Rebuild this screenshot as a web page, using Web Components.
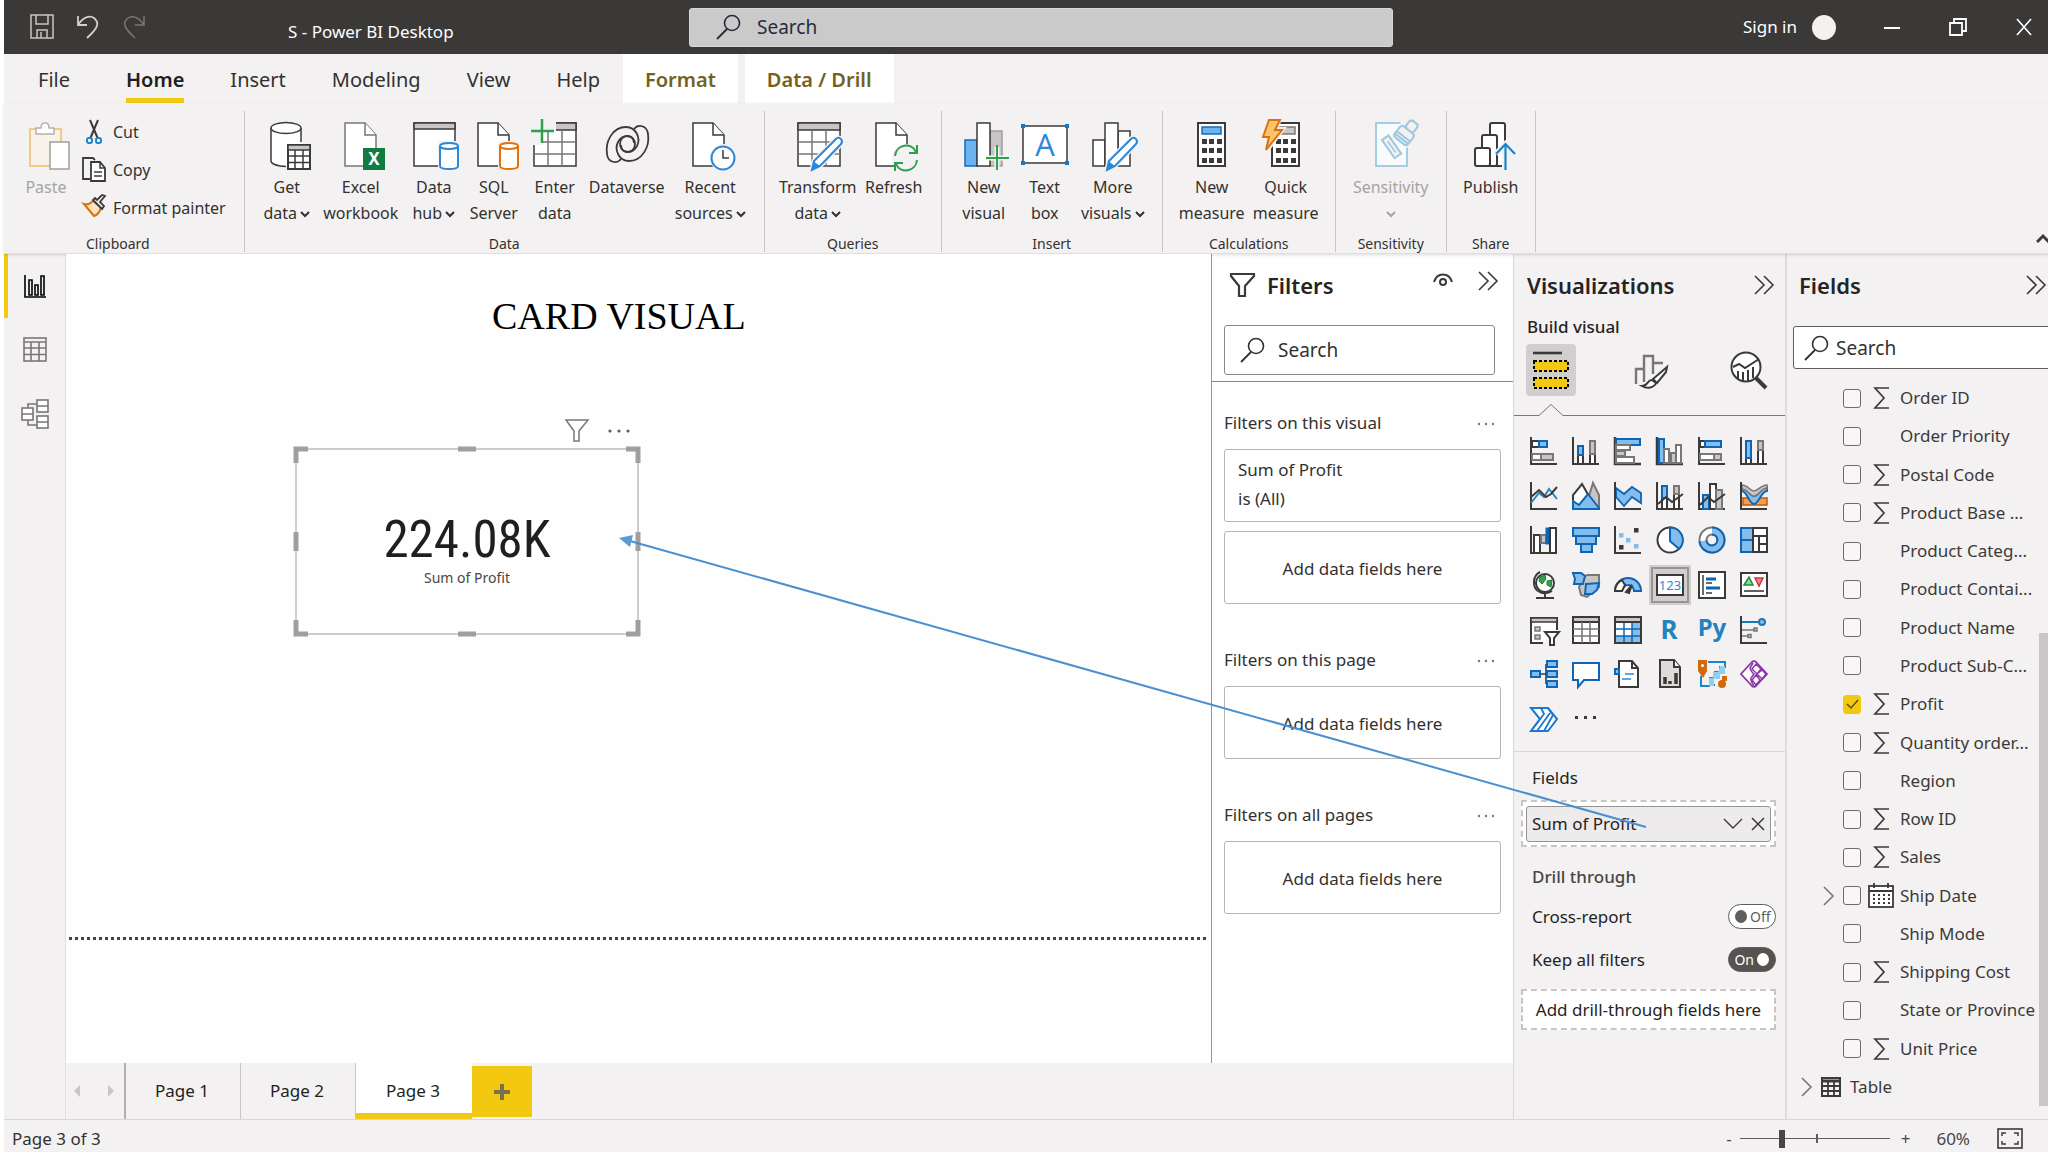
<!DOCTYPE html>
<html lang="en">
<head>
<meta charset="utf-8">
<title>S - Power BI Desktop</title>
<style>
html,body{margin:0;height:100%}
body{font:17px/26px "Noto Sans","Open Sans",sans-serif;color:#323130;background:#fff;overflow:hidden}
</style>
</head>
<body>
<pb-app></pb-app>
<script>
const K='#3b3a39',G='#797775',B='#83bdec',D='#0f64b4',L='#c8c6c4',W='#fff';
const p=(d,f='none',s=K,w=2,x='')=>`<path d="${d}" fill="${f}" stroke="${s}" stroke-width="${w}" ${x}/>`;
const r=(x,y,w,h,f=W,s=K,sw=2,rx=0)=>`<rect x="${x}" y="${y}" width="${w}" height="${h}" fill="${f}" stroke="${s}" stroke-width="${sw}" rx="${rx}"/>`;
const c=(x,y,q,f='none',s=K,w=2)=>`<circle cx="${x}" cy="${y}" r="${q}" fill="${f}" stroke="${s}" stroke-width="${w}"/>`;
const doc=(x,s=K)=>p(`M${x} 4h20l11 12v31h-31z`,W,s,1.5)+p(`M${x+20} 4v12h11`,W,s,1.5);
const cyl=(x,s)=>p(`M${x-2} 22h23v30h-23z`,'#f3f1f1','none')+p(`M${x} 27v20c0 4 18 4 18 0V27`,W,s,2)+`<ellipse cx="${x+9}" cy="27" rx="9" ry="3" fill="#fff" stroke="${s}" stroke-width="2"/>`;
const grid=(x)=>r(x,4,42,43,W,K,1.5)+r(x,4,42,7,L,K,1.5)+p(`M${x} 23h42M${x} 35h42M${x+14} 11v36M${x+28} 11v36`,'none',G,1.5);
const pencil=p('M43 20c3-3 8 1 5 5L27 47l-8 4 2-9z','#fff','#f3f1f1',5)+p('M43 20c3-3 8 1 5 5L27 47l-8 4 2-9z',W,'#2b88d8',2)+p('M21 43l5 4-7 4z','#2b88d8','#2b88d8',1);
const dots9=[15,22,30].map(x=>[20,29,39].map(y=>`<rect x="${x}" y="${y}" width="5" height="5" fill="${K}"/>`).join('')).join('');
const axis=p('M1 0v27h26','none',K,2);
const ICONS={
/* ribbon, 50 x 52 */
paste:[50,52,r(9,10,31,37,'#f8f2e8','#f3c98b',2)+r(29,23,19,27,'#fff','#a19f9d',1.5)+p('M15 15V9h5c0-7 8-7 8 0h5v6z',W,'#b3b0ad',1.5)],
getdata:[50,52,p('M9 9v33c0 3 7 5 16 5.500V25h14V9z',W,'none')+p('M9 9v33c0 3 7 5 15 5.500M39 9v14','none',K,1.500)+`<ellipse cx="24" cy="9" rx="15" ry="5.500" fill="#fff" stroke="${K}" stroke-width="1.500"/>`+r(26,26,22,24,W,K,2)+r(26,26,22,5,L,K,1.500)+p('M33 31v19M41 31v19M26 37h22M26 43.500h22','none',K,1.500)],
excel:[50,52,doc(9,G)+r(27,29,22,22,'#107c41','none',0)+`<text x="38" y="46" font-size="17" font-weight="700" fill="#fff" text-anchor="middle">X</text>`],
datahub:[50,52,r(5,4,41,43,W,K,1.500)+r(5,4,41,6,L,K,1.500)+cyl(31,'#2b88d8')],
sql:[50,52,doc(9)+cyl(31,'#e3730c')],
enter:[50,52,grid(4)+p('M0 0h26v12H12v14H0z','#f3f1f1','none')+p('M12 0v24M1 12h23','none','#2f9e4f',2.500)],
dataverse:[50,52,['','rotate(180 25.500 25)'].map(t=>`<g transform="${t}">${p('M32 24c0-10-14-9-14 1 0 9 12 11 17 2 4-8-1-19-11-19C11 8 3 22 5 35c1 9 10 10 14 5','none',K,1.800)}</g>`).join('')],
recent:[50,52,doc(8)+c(39,39,14,'#f3f1f1','none')+c(38,39,11.500,W,'#2b88d8',2)+p('M38 31v8h6','none',K,1.500)],
transform:[50,52,grid(5)+pencil],
refresh:[50,52,doc(7)+c(37,39,14,'#f3f1f1','none')+p('M26 37c1-12 17-14 21-4M48 26v8h-8M48 41c-1 12-17 14-21 4M26 52v-8h8','none','#2f9e4f',2)],
newvisual:[50,52,r(31,12,12,35,L,'#a19f9d',1.500)+r(6,21,12,26,'#6db3f2','#0f6cbd',1.500)+r(18,4,13,43,W,K,1.500)+p('M38 28v23M27 39h23','none','#f3f1f1',5)+p('M38 26v25M27 39h23','none','#2f9e4f',2)],
textbox:[50,52,r(3,7,44,37,W,K,1.500)+[[1,5],[45,5],[1,42],[45,42]].map(a=>r(a[0],a[1],4,4,'#0f78d4','none',0)).join('')+`<text x="25" y="37" font-size="31" fill="#2b88d8" text-anchor="middle" font-family="Open Sans">A</text>`],
morevisuals:[50,52,r(5,21,12,26,W,K,1.500)+r(30,12,12,35,W,K,1.500)+r(17,4,13,43,W,K,1.500)+pencil],
newmeasure:[50,52,r(11,4,27,43,W,K,2)+r(15,8,19,7,'#6db3f2','#0f6cbd',1.500)+dots9],
quickmeasure:[50,52,r(11,4,27,43,W,K,2)+r(18,8,16,7,L,G,1.500)+dots9+p('M7 0h12l-4 10h7L5 33l3-14H1z','#f3f1f1','#f3f1f1',4)+p('M8 1h11l-5 10h7L5 31l3-13H2z','#fcc46a','#d9730d',2)],
sensitivity:[50,52,r(10,4,31,43,'#f8fafc','#9cc8e2',1.800)+p('M34 2l16 0 1 20-12 8z','#f3f1f1','none')+`<g transform="rotate(38 39 16)">${r(30,10,17,14,'#f3f1f1','#9cc8e2',2,3)+r(34,0,10,10,'#f3f1f1','#9cc8e2',2,3)+p('M30 18h17M30 21h17','none','#9cc8e2',2)}</g><g transform="rotate(55 25 27)">${r(15,23,22,8,'#f3f1f1','#9cc8e2',2)+p('M19 27h14','none','#9cc8e2',1.500)}</g>`],
publish:[50,52,r(24,4,15,43,W,K,2,2)+r(16,16,15,31,W,K,2,2)+r(9,29,15,18,W,K,2,2)+p('M39 25v27M30 35l9.500-10 9.500 10','none','#f3f1f1',6)+p('M39.500 25v26M30 35l9.500-10 9.500 10','none','#1a86c8',2.200)],
/* small */
cut:[24,26,p('M8 1l8 19M16 1L8 20','none',K,2)+r(5,19,5,5,W,'#1a86c8',2,2)+r(14,19,5,5,W,'#1a86c8',2,2)],
copy:[24,26,p('M8 22H1V1h10l2 2','none',K,1.800)+p('M9 5h9l5 6v13H9z',W,K,1.800)+p('M18 5v6h5M12 15h8M12 19h8','none',K,1.500)],
painter:[24,26,p('M2 9l10 12c3-1 6-4 7-9l-8-6c-3 3-6 4-9 3z','#fde3c4','#d9730d',2)+p('M11 5l9 9 2-3-4-4 5-6-3-1-5 5-2-2z','#f3f1f1',K,1.800)],
save:[24,26,r(1,1,22,23,'none','#c8c6c4',1.500)+p('M6 1v9h12V1M7 24v-8h10v8M11 18v6','none','#c8c6c4',1.500)],
undo:[24,26,p('M2 2v9h9M2 11C7 3 14 1 18 4c6 5 4 10-7 20','none','#d2d0ce',1.800)],
redo:[24,26,p('M22 2v9h-9M22 11C17 3 10 1 6 4c-6 5-4 10 7 20','none','#797775',1.500)],
mag:[26,26,c(17,9,7.500,'none','currentColor',1.600)+p('M12 15L2 25','none','currentColor',1.800)],
min:[18,18,p('M1 10h16','none','#fff',2)],
restore:[18,18,p('M5 4V1h12v12h-4M1 5h12v12H1z','none','#fff',1.800)],
close:[18,18,p('M2 1l14 16M16 1L2 17','none','#fff',1.600)],
up:[14,12,p('M1 9l6-6 6 6','none',K,3)],
caret:[10,8,p('M1 2l4 4 4-4','none','currentColor',2)],
chart:[26,30,p('M3 4v22h21','none','#000',1.600)+p('M7 9h3v15H7zM13 14h3v10h-3zM19 5h3v19h-3z','none','#000',1.600)],
tablegrid:[26,30,r(2,3,22,23,'none',G,1.600)+p('M2 7h22M2 13h22M2 19.500h22M9 7v19M17 7v19','none',G,1.600)],
model:[28,30,r(16,1,11,12,W,G,1.600)+r(16,17,11,12,W,G,1.600)+r(1,9,11,12,W,G,1.600)+p('M16 7h11M16 23h11M1 15h11M7 9V5h9M7 21v5h9','none',G,1.600)],
funnel:[26,26,p('M2 2h23v2l-9 10v10h-6V14L2 4z','none',K,2.200)],
funnelthin:[26,26,p('M2 2h22L15 13v10h-5V13z','none',G,1.500)],
dots:[24,6,[3,12,21].map(x=>c(x,3,1.600,'currentColor','none')).join('')],
more:[18,6,[2,9,16].map(x=>c(x,4,1.200,'#797775','none')).join('')],
eye:[22,16,p('M2 9C5-1 17-1 20 9','none',K,2)+c(11,9,3,'none',K,2)],
dbl:[22,22,p('M2 2l9 9-9 9M11 2l9 9-9 9','none',K,1.600)],
right:[12,22,p('M1 2l9 9-9 9','none',G,1.600)],
down:[20,12,p('M1 1l9 9 9-9','none',K,1.400)],
x:[14,14,p('M1 1l12 12M13 1L1 13','none',K,1.500)],
sigma:[17,24,p('M16 2H2l9 10-9 10h14','none',K,1.700)],
calendar:[26,25,r(1,3,24,21,W,K,1.800)+p('M1 8h24M6 0v5M20 0v5','none',K,1.800)+p('M5 12h17M5 16h17M5 20h17','none',K,1.800,'stroke-dasharray="2 3"')],
tbl:[20,20,r(1,1,18,18,'none',K,2)+p('M1 4h18','none',K,3)+p('M1 9h18M1 14h18M7 3v16M13 3v16','none',K,1.800)],
plus:[18,18,p('M9 1v16M1 9h16','none','#7a6f4e',4)],
tri:[8,14,p('M7 1v12L1 7z',L,'none')],
fit:[26,22,r(1,1,24,19,'none',K,1.600)+p('M5 8V5h4M17 5h4v3M21 13v3h-4M9 16H5v-3','none',K,1.500)],
/* pane mode tabs, 40 x 40 */
build:[40,40,p('M2 3h29','none',K,2.600)+r(3,11,34,10,'#f2c811','#000',2).replace('/>',' stroke-dasharray="3 2"/>')+r(3,28,34,10,'#f2c811','#000',2).replace('/>',' stroke-dasharray="3 2"/>')],
format:[40,40,p('M6 34V19h8V6h9v18M14 19v13M23 13h10','none',G,2.400)+p('M37 17L23 29l4 4 9-11zM22 30c-5 0-4 6-10 6 5 3 12 2 14-3z',W,K,2)],
analytics:[40,40,c(18,17,14.500,W,K,2)+p('M5 17l6-3 6 4 14-9M10 21v8M15 22v10M20 20v11M25 17v11','none',K,2)+p('M28 28l10 10','none',K,4)],
/* visual types, 28 x 28 */
v0:[28,28,axis+r(2,4,7,6,W)+r(9,4,8,6,B,D)+r(2,17,9,6,W,G)+r(11,17,12,6,L,G)],
v1:[28,28,axis+r(6,18,5,9,W)+r(6,9,5,9,B,D)+r(18,17,5,10,W)+r(18,4,5,13,L,G)],
v2:[28,28,p('M1 0v27h26','none',K,2.500)+r(2,2,24,6,B,D)+r(2,8,14,5,W,G)+r(2,14,9,5,L,G)+r(2,20,18,6,W,G)],
v3:[28,28,p('M1 0v27h26','none',K,2.500)+r(3,2,5,24,B,D)+r(8,12,5,14,W,G)+r(15,16,5,10,L,G)+r(20,8,5,18,W,G)],
v4:[28,28,axis+r(2,4,5,6,W)+r(7,4,16,6,B,D)+r(2,17,14,6,W,G)+r(16,17,7,6,L,G)],
v5:[28,28,axis+r(6,21,5,6,W)+r(6,4,5,17,B,D)+r(18,13,5,14,W)+r(18,4,5,9,L,G)],
v6:[28,28,axis+p('M1 21L9 11l5 4 5-8 8 10','none','#2b88b8',2)+p('M1 15l8-7 7 7 5-3 6-7','none',K,2)],
v7:[28,28,p('M13 27L21 1l6 12v14z',L,G)+p('M1 27V13L10 2l8 14-7 11z',W,K)+p('M1 27v-8l6 4 9-11 11 14v1z',B,D)],
v8:[28,28,p('M2 6l8 6 8-7 9 6v10l-9-6-8 9-8-9z',B,D,1.800)+axis],
v9:[28,28,axis+r(6,15,5,12,W)+r(6,4,5,12,B,D)+r(18,12,5,15,W)+r(18,4,5,8,L,G)+p('M2 22l8-7 6 5 11-8','none',K,2)],
v10:[28,28,axis+r(5,13,6,14,B,D)+r(12,2,6,25,W)+r(18,8,6,19,L,G)+p('M2 23l8-8 6 5 11-8','none',K,2)],
v11:[28,28,r(3,16,24,7,'#f0a04a','#c65f0a',1.600)+p('M2 9c5 0 7 13 12 13s7-13 13-13v-4c-6 0-8 9-13 9S8 6 2 6z',B,D,1.800)+p('M2 3c6 0 8 6 12 6s7-6 13-6v3c-6 0-8 8-13 8S8 7 2 7z',L,G,1.500)+axis],
v12:[28,28,axis+r(4,9,6,18,W)+r(11,9,5,8,L,G)+r(16,2,3,16,D,D,1)+r(20,2,6,25,W)],
v13:[28,28,r(1,2,26,8,B,D)+r(4,10,20,8,B,D)+r(9,18,11,8,B,D)],
v14:[28,28,axis+[[20,2,K],[5,7,B],[12,12,B],[5,19,K],[20,18,B]].map(a=>r(a[0],a[1],4.500,4.500,a[2],'none',0)).join('')],
v15:[28,28,c(14,14,12.500,W,K)+p('M14 1.500A12.500 12.500 0 0 1 23 23L14 15z',B,D)],
v16:[28,28,c(14,14,9,'none',G,9)+c(14,14,9,'none',W,5)+p('M14 5a9 9 0 1 1-9 10','none',D,9)+p('M14 5a9 9 0 1 1-9 10','none',B,5)],
v17:[28,28,r(1,2,12,12,B,D)+r(1,14,12,12,B,D)+r(13,2,14,8,W,K)+r(13,10,6,16,W,K)+r(19,10,8,8,W,K)+r(19,18,8,8,W,K)],
v18:[28,28,c(15,12,9,W,K)+p('M10 6l5-2 1 4-4 5-3-3zM17 10l5-1-1 7-4-2z','#36a04e','#1e7b3c',1)+p('M10 1C2 5 2 18 10 21c4 2 9 1 12-1M15 23v4M6 27h18','none',K,2)],
v19:[28,28,p('M12 6l3-2h12v12l-6 5-6 5-6-2-2-8z',L,G)+p('M1 2h8l4 3-2 8H2l1-5zM14 13l13-1-2 7-5 4h-7z',B,D)],
v20:[28,28,p('M1 20a13 13 0 0 1 26 0h-7a6 6 0 0 0-12 0z',B,D)+p('M1 20a13 13 0 0 1 7-11l3 5-3 6z',W,K)+p('M12 21l6-7-3 8z',K,K,2)],
v21:[28,28,r(1,4,26,20,W,K)+`<text x="14" y="19" font-size="13" fill="#2b88d8" text-anchor="middle">123</text>`],
v22:[28,28,r(1,1,26,26,W,K)+p('M5 4v20','none',K,1.500)+p('M8 8h10M8 17h14','none',D,3)+p('M8 12h6M8 22h6','none',K,1.500)],
v23:[28,28,r(1,2,26,23,W,K)+p('M4 14l5-8 4 8z','#8fd0a0','#1e8b3c',1.500)+p('M15 7h8l-4 8z','#e88','#d13438',1.500)+p('M4 20h20','none',K,1.600)],
v24:[28,28,p('M13 27H1V2h26v12','#fff',K)+r(1,2,26,4,L,K,1.500)+r(5,11,5,4,L,G,1.500)+r(5,19,5,4,L,G,1.500)+p('M15 16h14l-5 6v7h-4v-7z',W,K,2)],
v25:[28,28,r(1,1,26,26,W,K)+r(1,1,26,5,L,K)+p('M10 6v21M18 6v21M1 13h26M1 20h26','none',G,1.600)],
v26:[28,28,r(1,1,26,26,W,K)+r(18,6,9,21,B,'none',0)+r(1,20,26,7,B,'none',0)+p('M10 6v21M18 6v21M1 13h26M1 20h26','none',D,1.500)+r(1,1,26,5,L,K)+p('M1 6v21h26V6','none',K,2)],
v27:[28,28,`<text x="13" y="23" font-size="26" font-weight="700" fill="#2383be" text-anchor="middle">R</text>`],
v28:[28,28,`<text x="14" y="20" font-size="24" font-weight="700" fill="#2383be" text-anchor="middle">Py</text>`],
v29:[28,28,axis+p('M2 6h18','none','#1a78b8',2)+c(22,6,3,B,'#1a78b8')+p('M2 14h12M2 20h6','none',G,1.600)+r(14,12,3,3,L,G,1.500)+r(8,18.500,3,3,L,G,1.500)],
v30:[28,28,p('M10 14h6M16 4v20M16 4h2M16 24h2','none',K,1.600)+r(1,11,9,6,B,D)+r(17,1,10,6,B,D)+r(17,11,10,6,B,D)+r(17,21,10,6,B,D)],
v31:[28,28,p('M1 3h26v17H12l-6 7v-7H1z',W,D)],
v32:[28,28,p('M5 1h13l6 7v19H5z',W,K)+p('M18 1v7h6M11 14h9M8 19h9','none','#2b88d8',1.600)+p('M18 1v7h6','none',K)+r(1,9,4,5,B,D)],
v33:[28,28,p('M4 0h14l6 7v20H4z','#dddbd9',K)+p('M18 0v7h6','#fff',K)+p('M9 17v7M14 21v3M20 13v11','none',K,3.500)],
v34:[28,28,p('M10 2h17v5h-5v5h-5v6h-5v7h5M12 26H3V16','none','#1a86c8',2)+p('M22 6h5v8h-5v5h-6v7h-5v-8h4v-6h5z','#8fd0f0','none')+p('M0 0h9v11l-4 7-5-7z','#d06a0a','none')+c(4.500,5.500,1.500,W,'none')+c(24,24,4,'#d06a0a','none')+r(24,16,5,5,'#d06a0a','none',0)],
v35:[28,28,p('M12 2L1 14l11 12c1 1 3 1 4 0l11-12L16 2c-1-1-3-1-4 0z',W,'#8a35a8',1.800)+p('M13 3l-3 5c0 3 5 7 4 6l-3 4c-1 3 2 6 3 8M16 4l5 5-4 5-5-5zM22 10l4 4-4 5-5-5zM16 15l4 5-4 5-4-5z','none','#8a35a8',1.500)],
v36:[28,28,p('M1 3h17l9 11-9 12H1l9-12z',W,'#1a78d0',2)+p('M1 3h10l3 6L1 26M14 26l9-16-5-7M7 26L20 8','none','#1a78d0',1.800)],
v37:[28,28,[3,12,21].map(x=>r(x,11,3,3,K,'none',0)).join('')]
};
const BTN='button{font:inherit;color:inherit;background:none;border:0;margin:0;padding:0;display:flex;align-items:center;justify-content:center}';
function el(name,css,html){
  customElements.define(name,class extends HTMLElement{
    connectedCallback(){
      if(this.shadowRoot)return;
      const s=this.attachShadow({mode:'open'});
      s.innerHTML=`<style>*{box-sizing:border-box}:host{display:block;box-sizing:border-box}${BTN}${css}</style>${typeof html==='function'?html(this):html}`;
    }
  });
}
const ic=n=>`<pb-icon name="${n}"></pb-icon>`;
el('pb-icon',':host{display:block;flex:none;line-height:0}svg{display:block;overflow:visible}',h=>{
  const[w,t,b]=ICONS[h.getAttribute('name')];
  return `<svg width="${w}" height="${t}" viewBox="0 0 ${w} ${t}" aria-hidden="true">${b}</svg>`;
});
el('pb-search',`:host{display:flex;align-items:center;border:1px solid #8a8886;border-radius:3px;background:#fff;color:#323130}
input{flex:1;min-width:0;width:0;border:0;outline:0;background:none;font:inherit;font-size:19px;color:inherit;padding:0}
input::placeholder{color:inherit;opacity:1}`,`${ic('mag')}<input type="search" placeholder="Search" aria-label="Search">`);

el('pb-titlebar',`:host{display:flex;align-items:center;height:54px;background:#3b3838;color:#fff;padding:0 15px 0 26px}
.q{display:flex;gap:22px;width:258px}.t{width:401px;padding-top:10px}
pb-search{width:704px;height:39px;background:#cbcaca;border-color:#d8d6d6;padding-left:25px;gap:16px;color:#252a3a}
.r{margin-left:auto;display:flex;align-items:center}.s{gap:15px;margin-right:47px}
.s i{width:24px;height:25px;border-radius:50%;background:#f3f2f1}.w{display:flex;gap:48px}`,
`<div class="q"><button aria-label="Save">${ic('save')}</button><button aria-label="Undo">${ic('undo')}</button><button aria-label="Redo">${ic('redo')}</button></div>
<div class="t">S - Power BI Desktop</div><pb-search></pb-search>
<div class="r"><button class="s">Sign in<i></i></button><div class="w"><button aria-label="Minimize">${ic('min')}</button><button aria-label="Restore">${ic('restore')}</button><button aria-label="Close">${ic('close')}</button></div></div>`);

el('pb-menu',`:host{display:flex;height:49px;font-size:20px;padding-left:11px;background:#f3f1f1}
button{padding:2px 23px 0;position:relative}.f{margin-right:10px}
.a{font-weight:600;color:#201f1e}.a::after{content:"";position:absolute;left:23px;right:23px;bottom:0;height:5px;background:#f2c811}
.c{background:#fff;color:#75611c;font-weight:600;padding:2px 22px 0}.c+.c{margin-left:7px}`,
`<button class="f">File</button><button class="a">Home</button><button>Insert</button><button>Modeling</button><button>View</button><button>Help</button><button class="c">Format</button><button class="c">Data / Drill</button>`);

el('pb-tool',`:host{flex:none}button{flex-direction:column;justify-content:flex-start;width:100%}
span{display:flex;align-items:center;justify-content:center;gap:3px;min-height:26px;white-space:nowrap}
pb-icon{margin-bottom:3px}span pb-icon{margin:2px 0 0}.d{color:#a6a4a2}`,h=>{
  h.style.width=h.getAttribute('width')+'px';
  const a=h.getAttribute('label').split('|'),m=h.hasAttribute('menu'),d=h.hasAttribute('disabled');
  return `<button class="${d?'d':''}" ${d?'disabled':''}>${ic(h.getAttribute('icon'))}${a.map((t,i)=>`<span>${t}${m&&i===a.length-1?ic('caret'):''}</span>`).join('')}</button>`;
});
el('pb-group',`:host{display:flex;flex-direction:column;justify-content:space-between;height:141px;padding:8px 12px 0;border-right:1px solid #c8c6c4}
:host([wide]){padding:8px 18px 0 6px}
.b{display:flex;align-items:flex-start}.l{font-size:14px;line-height:16px;text-align:center}`,h=>`<div class="b"><slot></slot></div><div class="l">${h.getAttribute('label')}</div>`);
const tool=(i,l,w,m='')=>`<pb-tool icon="${i}" label="${l}" width="${w}" ${m}></pb-tool>`;
el('pb-ribbon',`:host{display:flex;height:151px;padding-top:8px;background:#f3f1f1;border-bottom:1px solid #e1dfdd;box-shadow:0 1px 3px #0002;position:relative;font-size:16px}
.s{display:flex;flex-direction:column;margin:-6px 0 0}.s button{height:38px;gap:7px;justify-content:flex-start;white-space:nowrap}
.e{margin:0 0 8px auto;align-self:flex-end;overflow:hidden;width:12px;justify-content:flex-start}`,
`<pb-group label="Clipboard" wide>${tool('paste','Paste',72,'disabled')}<div class="s"><button>${ic('cut')}Cut</button><button>${ic('copy')}Copy</button><button>${ic('painter')}Format painter</button></div></pb-group>
<pb-group label="Data">${tool('getdata','Get|data',60,'menu')+tool('excel','Excel|workbook',88)+tool('datahub','Data|hub',58,'menu')+tool('sql','SQL|Server',62)+tool('enter','Enter|data',60)+tool('dataverse','Dataverse',84)+tool('recent','Recent|sources',83,'menu')}</pb-group>
<pb-group label="Queries">${tool('transform','Transform|data',82,'menu')+tool('refresh','Refresh',70)}</pb-group>
<pb-group label="Insert">${tool('newvisual','New|visual',60)+tool('textbox','Text|box',62)+tool('morevisuals','More|visuals',74,'menu')}</pb-group>
<pb-group label="Calculations">${tool('newmeasure','New|measure',74)+tool('quickmeasure','Quick|measure',74)}</pb-group>
<pb-group label="Sensitivity">${tool('sensitivity','Sensitivity|',86,'menu disabled')}</pb-group>
<pb-group label="Share">${tool('publish','Publish',64)}</pb-group>
<button class="e" aria-label="Collapse ribbon">${ic('up')}</button>`);

el('pb-rail',`:host{width:62px;background:#f3f1f1;border-right:1px solid #e1dfdd}
button{height:64px;width:100%;border-left:4px solid transparent;padding-right:4px}.a{border-color:#f2c811}`,
`<button class="a" aria-label="Report">${ic('chart')}</button><button aria-label="Data">${ic('tablegrid')}</button><button aria-label="Model">${ic('model')}</button>`);

el('pb-card',`:host{width:344px;height:187px;border:2px solid #cfcdcb;display:flex;flex-direction:column;align-items:center;padding-top:60px;color:#201f1e}
b{font:400 51px/60px "Roboto Condensed",Roboto,sans-serif}small{font-size:14px;line-height:20px;color:#494745;margin-top:-2px}
svg{position:absolute;left:-4px;top:-4px}
.m{position:absolute;right:6px;top:-32px;display:flex;align-items:center;gap:17px;color:#605e5c}`,
`<b>224.08K</b><small>Sum of Profit</small>
<svg width="348" height="191" viewBox="0 0 348 191"><path d="M3 17V3h12M333 3h12v14M345 174v14h-12M15 188H3v-14M165 3h18M165 188h18M3 86v19M345 86v19" fill="none" stroke="#a19f9d" stroke-width="5"/></svg>
<div class="m"><button aria-label="Filters on visual">${ic('funnelthin')}</button><button aria-label="More options">${ic('dots')}</button></div>`);
el('pb-canvas',`:host{flex:1;position:relative;background:#fefefe}
h1{position:absolute;left:426px;top:40px;margin:0;font:400 38px/44px "Liberation Serif",serif;color:#000}
pb-card{position:absolute;left:229px;top:194px}
hr{position:absolute;left:3px;right:3px;top:683px;height:3px;margin:0;border:0;background:repeating-linear-gradient(90deg,#444 0 3px,transparent 3px 6px)}`,
`<h1>CARD VISUAL</h1><pb-card></pb-card><hr>`);

el('pb-filter-section',`.h{display:flex;justify-content:space-between;align-items:center;height:26px;margin-bottom:13px;padding-right:6px}
.c{border:1px solid #b8b6b4;border-radius:3px;height:73px;background:#fff;margin-bottom:9px;padding:5px 13px;line-height:29px}
.n{display:flex;align-items:center;justify-content:center;padding:2px 0 0;width:100%}`,h=>`
<div class="h"><span>${h.getAttribute('label')}</span><button aria-label="More">${ic('more')}</button></div>
${h.hasAttribute('field')?`<div class="c">${h.getAttribute('field')}<br>is (All)</div>`:''}<div class="c n">Add data fields here</div>`);
el('pb-filters',`:host{width:302px;background:#fefefe;border-left:1px solid #979593}
.h{height:128px;border-bottom:1px solid #8a8886;padding:16px 14px 0 12px}
.t{display:flex;align-items:center;height:30px;padding-left:5px;color:#252423}h2{margin:0 0 0 12px;font-size:22px;line-height:30px;font-weight:600;flex:1}
.t button{margin:-8px 0 0 23px}pb-search{height:50px;margin:25px 4px 0 0;padding-left:14px;gap:13px}
.b{padding:28px 12px 0;display:flex;flex-direction:column;gap:34px}`,
`<div class="h"><div class="t">${ic('funnel')}<h2>Filters</h2><button aria-label="Show">${ic('eye')}</button><button aria-label="Collapse">${ic('dbl')}</button></div><pb-search></pb-search></div>
<div class="b"><pb-filter-section label="Filters on this visual" field="Sum of Profit"></pb-filter-section><pb-filter-section label="Filters on this page"></pb-filter-section><pb-filter-section label="Filters on all pages"></pb-filter-section></div>`);

el('pb-pages',`:host{display:flex;height:56px;background:#f3f1f1}
.n{display:flex;width:60px;justify-content:space-between;padding:0 9px 0 7px;border-right:2px solid #b3b0ad}.n button+button{transform:scaleX(-1)}
.p{width:115px;border-right:1px solid #c8c6c4;color:#201f1e;padding-right:2px}.a{background:#fff;border-bottom:6px solid #f2c811;padding-top:6px;width:116px;border-right:0}
.add{width:60px;height:51px;margin-top:3px;background:#f2c811}`,
`<div class="n"><button aria-label="Previous page">${ic('tri')}</button><button aria-label="Next page">${ic('tri')}</button></div><button class="p">Page 1</button><button class="p">Page 2</button><button class="p a">Page 3</button><button class="add" aria-label="New page">${ic('plus')}</button>`);

el('pb-switch',`label{display:flex;align-items:center;justify-content:space-between;height:43px}
.k{position:relative;display:flex;align-items:center;width:48px;height:25px;border-radius:13px;border:1px solid #605e5c;background:#fff;padding:0 6px;gap:3px;font-size:14px;line-height:22px;color:#605e5c}
.k::before{content:"";width:12px;height:13px;border-radius:50%;background:#605e5c;flex:none}
input{position:absolute;inset:0;opacity:0;margin:0}
.on{background:#55524f;color:#fff;flex-direction:row-reverse}.on::before{background:#fff}`,h=>{const o=h.hasAttribute('on');
return `<label>${h.getAttribute('label')}<span class="k ${o?'on':''}"><input type="checkbox" role="switch" ${o?'checked':''}>${o?'On':'Off'}</span></label>`});
el('pb-visualizations',`:host{width:274px;background:#f3f1f1;border-left:1px solid #dad8d6;border-right:2px solid #dfdddb;color:#252423}
.t{display:flex;align-items:center;justify-content:space-between;height:30px;margin:16px 10px 0 13px}h2{margin:0;font-size:22px;line-height:30px;font-weight:600}
h3{margin:14px 13px 0;font-size:17px;line-height:26px;font-weight:500}
.m{display:flex;justify-content:space-between;margin:4px 12px 0;height:53px}.m button{width:50px;height:52px;border-radius:4px}.m .a{background:#d0cfce}
.l{display:flex;height:18px;margin-top:1px;align-items:flex-end}.l i{flex:1;height:1px;background:#797775}.l i:first-child{flex:none;width:25px}.l svg{display:block}
.g{display:grid;grid-template-columns:repeat(6,42px);grid-template-rows:repeat(7,1fr);height:312px;margin:13px 0 0 9px}
.g .s{background:#d0cfce;outline:2px solid #979593;outline-offset:-4px;height:40px;align-self:center}
.f{border-top:1px solid #dad8d6;margin-top:10px;padding:13px 9px 0 7px}.f h4{margin:0 12px 0 11px;font-size:17px;line-height:26px;font-weight:400}
.d{border:2px dashed #c8c6c4;background:#fff}.w{padding:4px 3px 3px;margin:9px 0 17px;height:47px}
.chip{display:flex;align-items:center;height:36px;border:1px solid #979593;border-radius:3px;background:#edebeb;padding:0 5px;gap:8px}.chip span{flex:1}
.p{padding:0 0 0 11px}.dz{height:41px;display:flex;align-items:center;justify-content:center;margin-top:8px;width:100%;color:#252423}
.f h4.b{font-weight:500;color:#494745;margin-bottom:5px}`,
`<div class="t"><h2>Visualizations</h2><button aria-label="Collapse">${ic('dbl')}</button></div><h3>Build visual</h3>
<div class="m"><button class="a" aria-label="Build">${ic('build')}</button><button aria-label="Format">${ic('format')}</button><button aria-label="Analytics">${ic('analytics')}</button></div>
<div class="l"><i></i><svg width="24" height="12" viewBox="0 0 24 12"><path d="M0 11.500L12 .5l12 11" fill="none" stroke="#797775"/></svg><i></i></div>
<div class="g">${Array.from({length:38},(_,i)=>`<button class="${i===21?'s':''}" aria-label="Visual type ${i+1}">${ic('v'+i)}</button>`).join('')}</div>
<div class="f"><h4>Fields</h4><div class="d w"><div class="chip"><span>Sum of Profit</span><button aria-label="Menu">${ic('down')}</button><button aria-label="Remove">${ic('x')}</button></div></div>
<h4 class="b">Drill through</h4><div class="p"><pb-switch label="Cross-report"></pb-switch><pb-switch label="Keep all filters" on></pb-switch></div><div class="d dz">Add drill-through fields here</div></div>`);

el('pb-field',`:host{flex:1;display:flex;min-height:0}label{display:flex;align-items:center;white-space:nowrap;padding-left:36px}
.e{width:20px;flex:none}.i{width:39px;padding:0 6px 0 7px;display:flex;justify-content:center;flex:none}
input{appearance:none;width:18px;height:19px;margin:0;border:1px solid #6e6c6a;border-radius:3px;background:#f8f6f6;flex:none}
input:checked{border-color:#f2c811;background:#f2c811}
.k{position:relative;display:flex}.k svg{position:absolute;left:3px;top:4px}
.t{padding-left:14px}.t pb-icon+pb-icon{margin:0 9px 0 8px}`,h=>{
  const l=h.getAttribute('label'),i=h.getAttribute('icon'),ck=h.hasAttribute('checked');
  if(i==='tbl')return `<label class="t">${ic('right')+ic('tbl')}<span>${l}</span></label>`;
  return `<label><span class="e">${i==='calendar'?ic('right'):''}</span><span class="k"><input type="checkbox" ${ck?'checked':''}>${ck?'<svg width="13" height="11"><path d="M1 5l4 4 7-8" fill="none" stroke="#5c4f14" stroke-width="1.500"/></svg>':''}</span><span class="i">${i?ic(i):''}</span><span>${l}</span></label>`;
});
const rows=[['Order ID',1],['Order Priority'],['Postal Code',1],['Product Base ...',1],['Product Categ...'],['Product Contai...'],['Product Name'],['Product Sub-C...'],['Profit',1,1],['Quantity order...',1],['Region'],['Row ID',1],['Sales',1],['Ship Date',2],['Ship Mode'],['Shipping Cost',1],['State or Province'],['Unit Price',1],['Table',3]];
el('pb-fields',`:host{width:261px;background:#f3f1f1;display:flex;flex-direction:column;color:#3b3a39;overflow:hidden}
.t{display:flex;align-items:center;justify-content:space-between;height:30px;margin:16px 1px 0 12px;color:#252423}h2{margin:0;font-size:22px;line-height:30px;font-weight:600}
pb-search{height:43px;margin:26px -4px 10px 6px;padding-left:9px;gap:7px;border-color:#605e5c;flex:none}
.b{flex:1;display:flex;min-height:0;margin-bottom:13px}.r{flex:1;display:flex;flex-direction:column;min-width:0}
.sb{width:9px;display:flex;flex-direction:column;justify-content:flex-end}.sb i{height:65%;background:#c8c6c6}`,
`<div class="t"><h2>Fields</h2><button aria-label="Collapse">${ic('dbl')}</button></div><pb-search></pb-search>
<div class="b"><div class="r">${rows.map(([l,i,k])=>`<pb-field label="${l}" ${i?`icon="${['','sigma','calendar','tbl'][i]}"`:''} ${k?'checked':''}></pb-field>`).join('')}</div><div class="sb"><i></i></div></div>`);

el('pb-status',`:host{display:flex;align-items:center;height:33px;background:#f3f1f1;border-top:1px solid #dad8d6;padding:5px 25px 0 8px}
.z{margin-left:auto;display:flex;align-items:center;color:#494745}
input{appearance:none;width:150px;height:18px;margin:0 11px 0 8px;background:linear-gradient(#605e5c,#605e5c) 76px 50%/2px 9px no-repeat,linear-gradient(#605e5c,#605e5c) 0 50%/100% 1px no-repeat}
input::-webkit-slider-thumb{appearance:none;width:6px;height:18px;background:#494745}
.f{margin-left:27px}.n{margin-left:26px}`,
`<span>Page 3 of 3</span><div class="z"><button aria-label="Zoom out">-</button><input type="range" min="0" max="100" value="27" aria-label="Zoom"><button aria-label="Zoom in">+</button><span class="n">60%</span><button class="f" aria-label="Fit to page">${ic('fit')}</button></div>`);

el('pb-app',`:host{display:flex;flex-direction:column;min-height:100vh;padding-left:4px;position:relative}
main{flex:1;display:flex;min-height:0}.c{flex:1;display:flex;flex-direction:column;min-width:0}.w{flex:1;display:flex}
.arrow{position:absolute;left:616px;top:528px;pointer-events:none}`,
`<pb-titlebar></pb-titlebar><pb-menu></pb-menu><pb-ribbon></pb-ribbon>
<main><pb-rail></pb-rail><div class="c"><div class="w"><pb-canvas></pb-canvas><pb-filters></pb-filters></div><pb-pages></pb-pages></div><pb-visualizations></pb-visualizations><pb-fields></pb-fields></main>
<pb-status></pb-status>
<svg class="arrow" width="1040" height="310" viewBox="0 0 1040 310" aria-hidden="true"><path d="M14 13L1030 299" fill="none" stroke="#4a8fd0" stroke-width="2"/><path d="M3 10l14-3-3 12z" fill="#5b9bd5"/></svg>`);
</script>
</body>
</html>
